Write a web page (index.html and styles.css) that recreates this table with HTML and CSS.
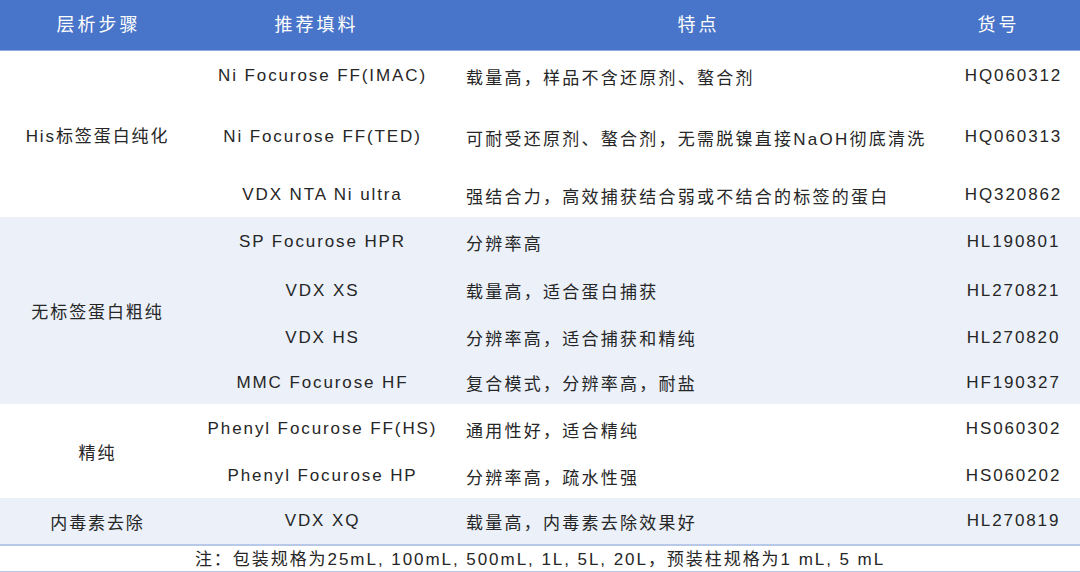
FILE: index.html
```html
<!DOCTYPE html>
<html lang="zh">
<head>
<meta charset="utf-8">
<link rel="stylesheet" href="styles.css">
</head>
<body>
<div class="sheet">
  <div class="head">
    <div class="h h1">层析步骤</div>
    <div class="h h2">推荐填料</div>
    <div class="h h3">特点</div>
    <div class="h h4">货号</div>
  </div>

  <div class="group g1">
    <div class="step">His标签蛋白纯化</div>
    <div class="c name">Ni Focurose FF(IMAC)</div><div class="c feat">载量高，样品不含还原剂、螯合剂</div><div class="c code">HQ060312</div>
    <div class="c name">Ni Focurose FF(TED)</div><div class="c feat">可耐受还原剂、螯合剂，无需脱镍直接NaOH彻底清洗</div><div class="c code">HQ060313</div>
    <div class="c name">VDX NTA Ni ultra</div><div class="c feat">强结合力，高效捕获结合弱或不结合的标签的蛋白</div><div class="c code">HQ320862</div>
  </div>

  <div class="group g2 shade">
    <div class="step">无标签蛋白粗纯</div>
    <div class="c name">SP Focurose HPR</div><div class="c feat">分辨率高</div><div class="c code">HL190801</div>
    <div class="c name">VDX XS</div><div class="c feat">载量高，适合蛋白捕获</div><div class="c code">HL270821</div>
    <div class="c name">VDX HS</div><div class="c feat">分辨率高，适合捕获和精纯</div><div class="c code">HL270820</div>
    <div class="c name">MMC Focurose HF</div><div class="c feat">复合模式，分辨率高，耐盐</div><div class="c code">HF190327</div>
  </div>

  <div class="group g3">
    <div class="step">精纯</div>
    <div class="c name">Phenyl Focurose FF(HS)</div><div class="c feat">通用性好，适合精纯</div><div class="c code">HS060302</div>
    <div class="c name">Phenyl Focurose HP</div><div class="c feat">分辨率高，疏水性强</div><div class="c code">HS060202</div>
  </div>

  <div class="group g4 shade">
    <div class="step">内毒素去除</div>
    <div class="c name">VDX XQ</div><div class="c feat">载量高，内毒素去除效果好</div><div class="c code">HL270819</div>
  </div>

  <div class="note">注：包装规格为25mL, 100mL, 500mL, 1L, 5L, 20L，预装柱规格为1 mL, 5 mL</div>
</div>
</body>
</html>
```

FILE: styles.css
```css
html, body {
  margin: 0;
  padding: 0;
  background: #ffffff;
}

.sheet {
  width: 1080px;
  font-family: "Liberation Sans", Arial, "Noto Sans CJK SC", sans-serif;
  color: #262626;
}

.head {
  height: 50px;
  background: #4874c9;
  border-bottom: 1px solid #8eaadf;
  display: grid;
  grid-template-columns: 194px 242px 522px 78px 44px;
  align-items: center;
  color: #ffffff;
  font-size: 18px;
  letter-spacing: 3px;
}

.h {
  text-align: center;
  padding-left: 3px;
  line-height: 50px;
}

.group {
  display: grid;
  grid-template-columns: 193px 257px 495px 135px;
  font-size: 17px;
  letter-spacing: 1.9px;
}

.shade {
  background: #ebf0f9;
}

.g1 { grid-template-rows: 50px 72px 44px; }
.g2 { grid-template-rows: 50px 47px 47px 43px; }
.g3 { grid-template-rows: 50px 44px; }
.g4 { grid-template-rows: 46px; }

.step {
  grid-column: 1;
  grid-row: 1 / -1;
  display: flex;
  align-items: center;
  justify-content: center;
  padding-left: 2px;
}

.c {
  display: flex;
  align-items: center;
  white-space: nowrap;
}

.name {
  grid-column: 2;
  justify-content: center;
  padding-left: 2px;
}

.feat {
  grid-column: 3;
  padding-left: 16px;
  letter-spacing: 2.25px;
}

.code {
  grid-column: 4;
  justify-content: center;
  padding-left: 2px;
}

.note {
  border-top: 2px solid #b7c8e8;
  border-bottom: 1px solid #b7c8e8;
  height: 25px;
  line-height: 27px;
  text-align: center;
  font-size: 17px;
  letter-spacing: 1.95px;
}
```
